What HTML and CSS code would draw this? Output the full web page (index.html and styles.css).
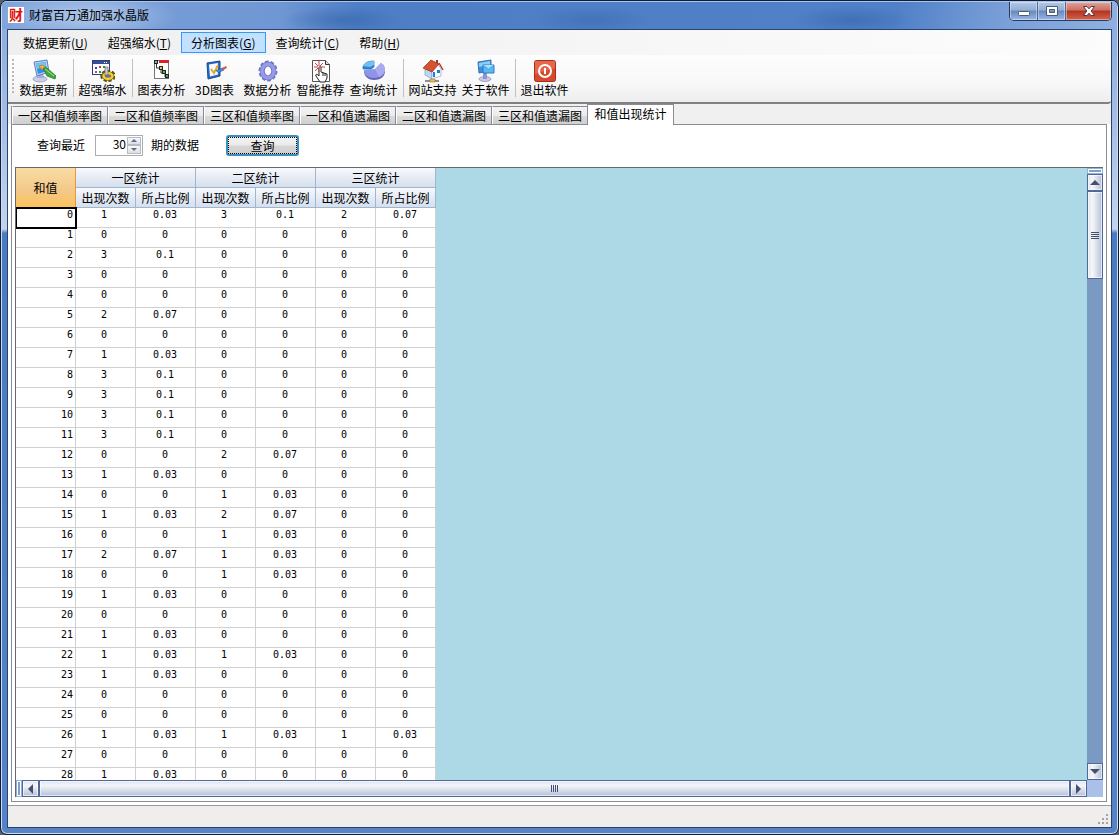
FILE: index.html
```html
<!DOCTYPE html>
<html lang="zh-CN">
<head>
    <meta charset="UTF-8">
    <meta name="viewport" content="width=device-width, initial-scale=1.0">
    <title>财富百万通加强水晶版</title>
    <link rel="stylesheet" href="styles.css">
</head>
<body>
    <div class="window">
        <header class="titlebar">
            <span class="app-icon">财</span>
            <h1 class="title">财富百万通加强水晶版</h1>
            <div class="window-buttons">
                <button class="win-btn" aria-label="最小化">
                    <svg width="14" height="12" viewBox="0 0 14 12"><rect x="1.5" y="6.5" width="11" height="4" rx="1" fill="#fff" stroke="#4b5a75"/></svg>
                </button>
                <button class="win-btn" aria-label="最大化">
                    <svg width="14" height="12" viewBox="0 0 14 12"><path fill-rule="evenodd" d="M1.5 1.5h11v9h-11zM4.5 4.500v3h5v-3z" fill="#fff" stroke="#4b5a75"/></svg>
                </button>
                <button class="win-btn close" aria-label="关闭">
                    <svg width="14" height="12" viewBox="0 0 14 12"><path d="M1.500 1.500h3.500L7 3.800l2-2.300h3.500L9.200 6l3.300 4.500H9L7 8.200l-2 2.300H1.500L4.800 6z" fill="#fff" stroke="#5a3540"/></svg>
                </button>
            </div>
        </header>

        <div class="client">
            <nav class="menubar">
                <button class="menu">数据更新(<u>U</u>)</button>
                <button class="menu">超强缩水(<u>T</u>)</button>
                <button class="menu active">分析图表(<u>G</u>)</button>
                <button class="menu">查询统计(<u>C</u>)</button>
                <button class="menu">帮助(<u>H</u>)</button>
            </nav>

            <div class="toolbar">
                <span class="grip"></span>
                <button class="tool">
                    <svg width="24" height="24" viewBox="0 0 24 24">
                        <ellipse cx="8" cy="20" rx="7" ry="3" fill="#c9cde6" stroke="#8c93bb" stroke-width=".7"/>
                        <path d="M6 14h5l1 5H5z" fill="#a5addb"/>
                        <path d="M2 3l13-2 2 12-12 4z" fill="#b9d2f3" stroke="#5e7fc0"/>
                        <path d="M4 4.500L13.500 3 15 12l-9 3z" fill="#2e8fe6"/>
                        <path d="M4 4.500L13.500 3l.6 4L5 10z" fill="#6fc4f7"/>
                        <path d="M7 7l4-1 3 3-4 2z" fill="#f3b63c" stroke="#b06f18" stroke-width=".6"/>
                        <path d="M11 9l4 0 9 8-1 3-8-3z" fill="#3faa3b" stroke="#23752a" stroke-width=".7"/>
                        <path d="M13 10l9 7" stroke="#a3e58d"/>
                    </svg>
                    <span>数据更新</span>
                </button>
                <span class="separator"></span>
                <button class="tool">
                    <svg width="24" height="24" viewBox="0 0 24 24">
                        <rect x="1.500" y="1.500" width="17" height="14" fill="#fff" stroke="#35406f"/>
                        <path d="M2 3.500h16" stroke="#344f9d" stroke-width="3"/>
                        <path d="M13 3.500h1m1 0h1" stroke="#fff"/>
                        <path d="M4 8h2v2H4z" fill="#2648c9"/><path d="M8 7h2v2H8z" fill="#d23535"/><path d="M4 12h2v2H4z" fill="#c43a9c"/><path d="M8 12h2v2H8z" fill="#2a9b42"/><path d="M12 7h2v2h-2z" fill="#2a9b42"/>
                        <ellipse cx="17" cy="17" rx="5.500" ry="4" fill="none" stroke="#665312" stroke-width="4.500" stroke-dasharray="2.700 1.500"/>
                        <ellipse cx="17" cy="17" rx="4.500" ry="3" fill="#777" stroke="#665312" stroke-width="3.600"/>
                        <ellipse cx="17" cy="17" rx="4.500" ry="3" fill="#777" stroke="#f1d338" stroke-width="2.400"/>
                        <path d="M14 8h3v8h-3z" fill="#ccc" stroke="#555" stroke-width=".6"/>
                    </svg>
                    <span>超强缩水</span>
                </button>
                <span class="separator"></span>
                <button class="tool">
                    <svg width="24" height="24" viewBox="0 0 24 24">
                        <rect x="4.500" y="1.500" width="14" height="18" fill="#fff" stroke="#777"/>
                        <path d="M9 1h10v3H9z" fill="#dd2020"/>
                        <path d="M6.500 5v4H10M11 11v3h4v4" fill="none" stroke="#333"/>
                        <rect x="4.500" y="1.500" width="3" height="3" fill="#6eb5c8" stroke="#222"/>
                        <rect x="9.500" y="7.500" width="3" height="3" fill="#e9c846" stroke="#222"/>
                        <rect x="12.500" y="11.500" width="3" height="3" fill="#55bd55" stroke="#222"/>
                        <rect x="15.500" y="15.500" width="3" height="3" fill="#3ca649" stroke="#222"/>
                    </svg>
                    <span>图表分析</span>
                </button>
                <button class="tool">
                    <svg width="24" height="24" viewBox="0 0 24 24">
                        <path d="M4 4l13-2v15L5 20z" fill="#236bc2" stroke="#194b91"/>
                        <path d="M6 5.500L15 4v11.500L7 17.500z" fill="#f6faff"/>
                        <path d="M8 10l3 4 4-8" fill="none" stroke="#eda22a" stroke-width="2"/>
                        <path d="M13 11.500l7-2.500 1 2-6 2.500z" fill="#4c92dc" stroke="#225799" stroke-width=".7"/>
                        <path d="M19 9l4-2 1 2-4 2z" fill="#df5454"/>
                    </svg>
                    <span>3D图表</span>
                </button>
                <button class="tool">
                    <svg width="24" height="24" viewBox="0 0 24 24">
                        <ellipse cx="12" cy="12" rx="8" ry="9" fill="none" stroke="#7479c9" stroke-width="3" stroke-dasharray="3.300 2"/>
                        <ellipse cx="12" cy="12" rx="5.800" ry="7" fill="none" stroke="#6b70c3" stroke-width="5"/>
                        <ellipse cx="12" cy="12" rx="6" ry="7" fill="none" stroke="#969be7" stroke-width="3.500"/>
                    </svg>
                    <span>数据分析</span>
                </button>
                <button class="tool">
                    <svg width="24" height="24" viewBox="0 0 24 24">
                        <path d="M3.500 1.500h13l4 4v17h-17z" fill="#fff" stroke="#555"/>
                        <path d="M16.500 1.500v4h4" fill="#ddd" stroke="#333"/>
                        <path d="M10 2v5M10 9v4M5 8h4M11 8h5M6 4l3 3M14 4l-3 3M6 12l3-3" stroke="#e33838"/>
                        <path d="M10 9c0-2 2-2 2 0v4l6 2v4l-2 4h-5l-4-6c-1-2 1-2 2-1l1 1z" fill="#fff" stroke="#222"/>
                        <path d="M14 14v3M16 14.500V17" stroke="#222"/>
                    </svg>
                    <span>智能推荐</span>
                </button>
                <button class="tool">
                    <svg width="24" height="24" viewBox="0 0 24 24">
                        <path d="M2 12c0 6 5 9 10 9 6 0 11-3 11-9z" fill="#6264b9"/>
                        <path d="M2 11l11-1 6-6c7 4 4 15-7 15-6 0-10-3-10-8z" fill="#9094e8"/>
                        <path d="M13 10l6-6c7 4 4 12-2 14z" fill="#a9abf1"/>
                        <path d="M1 8c1-4 5-6 11-6v6L9 10H1z" fill="#2e87d7" stroke="#2a62b2" stroke-width=".7"/>
                        <path d="M1 7c1-3 5-5 11-5v4L8 8z" fill="#6fc0f3"/>
                    </svg>
                    <span>查询统计</span>
                </button>
                <span class="separator"></span>
                <button class="tool">
                    <svg width="24" height="24" viewBox="0 0 24 24">
                        <path d="M11 18v4M4 22h14" stroke="#8d8d9d" stroke-width="2"/>
                        <path d="M9 20h5v3H9z" fill="#f0c13a" stroke="#9f7925" stroke-width=".6"/>
                        <path d="M4 10l7 2v8l-7-4z" fill="#b7daf5" stroke="#6e8dbc" stroke-width=".6"/>
                        <path d="M11 11l6-6 3 5v7l-9 3z" fill="#f9fbff" stroke="#7d98c6" stroke-width=".6"/>
                        <path d="M15 1h2v5h-2z" fill="#a8341f"/>
                        <path d="M2 9l8-8 8 4-7 8z" fill="#d6532f" stroke="#93301a" stroke-width=".7"/>
                        <path d="M18 4l4 7" stroke="#a9401f" stroke-width="1.500"/>
                        <path d="M12 13h2v5h-2zM16 11h3v3h-3z" fill="#2879d5"/>
                    </svg>
                    <span>网站支持</span>
                </button>
                <button class="tool">
                    <svg width="24" height="24" viewBox="0 0 24 24">
                        <ellipse cx="11" cy="20" rx="6" ry="2.500" fill="#c8cbe7" stroke="#8389b5" stroke-width=".7"/>
                        <path d="M9 14h4v6H9z" fill="#8d94c9"/>
                        <path d="M4 3l13-2v11L5 14z" fill="#3593df" stroke="#3a70b5"/>
                        <path d="M5 4l11-2v4L5 8z" fill="#89cff7"/>
                        <path d="M9 6h11v8H9z" fill="#5ab7f0" stroke="#2a7dc5"/>
                        <path d="M9 6l5.500 4L20 6" fill="#a7e2fb" stroke="#3b8fd1" stroke-width=".6"/>
                    </svg>
                    <span>关于软件</span>
                </button>
                <span class="separator"></span>
                <button class="tool">
                    <svg width="24" height="24" viewBox="0 0 24 24">
                        <rect x="1.500" y="1.500" width="21" height="21" rx="2" fill="#d8492e" stroke="#a92c18"/>
                        <path d="M2 2h20v7L2 15z" fill="#ed7d5f" opacity=".6"/>
                        <circle cx="12" cy="12" r="6" fill="none" stroke="#fff" stroke-width="2"/>
                        <path d="M12 9v6" stroke="#fff" stroke-width="2"/>
                    </svg>
                    <span>退出软件</span>
                </button>
            </div>

            <div class="tabs" role="tablist">
                <button class="tab" role="tab">一区和值频率图</button>
                <button class="tab" role="tab">二区和值频率图</button>
                <button class="tab" role="tab">三区和值频率图</button>
                <button class="tab" role="tab">一区和值遗漏图</button>
                <button class="tab" role="tab">二区和值遗漏图</button>
                <button class="tab" role="tab">三区和值遗漏图</button>
                <button class="tab selected" role="tab" aria-selected="true">和值出现统计</button>
            </div>

            <main class="panel">
                <form class="query" onsubmit="return false">
                    <label for="periods">查询最近</label>
                    <div class="spinner">
                        <input id="periods" type="number" value="30">
                        <div class="spin-buttons">
                            <button type="button" class="spin" aria-label="增加"><span class="arrow up"></span></button>
                            <button type="button" class="spin" aria-label="减少"><span class="arrow down"></span></button>
                        </div>
                    </div>
                    <span>期的数据</span>
                    <button class="submit">查询</button>
                </form>

                <div class="grid">
                    <div class="view">
                        <table>
                            <thead>
                                <tr>
                                    <th class="corner" rowspan="2">和值</th>
                                    <th colspan="2">一区统计</th>
                                    <th colspan="2">二区统计</th>
                                    <th colspan="2">三区统计</th>
                                </tr>
                                <tr>
                                    <th>出现次数</th>
                                    <th>所占比例</th>
                                    <th>出现次数</th>
                                    <th>所占比例</th>
                                    <th>出现次数</th>
                                    <th>所占比例</th>
                                </tr>
                            </thead>
                            <tbody id="rows"></tbody>
                        </table>
                    </div>
                    <div class="vscroll">
                        <span class="split"></span>
                        <button class="scroll-btn" aria-label="向上"><span class="arrow up"></span></button>
                        <span class="thumb"><i></i></span>
                        <span class="track"></span>
                        <button class="scroll-btn" aria-label="向下"><span class="arrow down"></span></button>
                    </div>
                    <div class="hscroll">
                        <span class="split"></span>
                        <button class="scroll-btn" aria-label="向左"><span class="arrow left"></span></button>
                        <span class="thumb"><i></i></span>
                        <button class="scroll-btn" aria-label="向右"><span class="arrow right"></span></button>
                    </div>
                    <div class="scroll-corner"></div>
                </div>
            </main>

            <footer class="statusbar">
                <svg width="12" height="12" viewBox="0 0 12 12" fill="#a6a3a3"><path d="M8 0h2v2H8zM4 4h2v2H4zM8 4h2v2H8zM0 8h2v2H0zM4 8h2v2H4zM8 8h2v2H8z"/></svg>
            </footer>
        </div>
    </div>
    <script>
        // how often each sum came up in zones one, two and three
        const counts = [
            [1, 3, 2], [0, 0, 0], [3, 0, 0], [0, 0, 0], [0, 0, 0],
            [2, 0, 0], [0, 0, 0], [1, 0, 0], [3, 0, 0], [3, 0, 0],
            [3, 0, 0], [3, 0, 0], [0, 2, 0], [1, 0, 0], [0, 1, 0],
            [1, 2, 0], [0, 1, 0], [2, 1, 0], [0, 1, 0], [1, 0, 0],
            [0, 0, 0], [1, 0, 0], [1, 1, 0], [1, 0, 0], [0, 0, 0],
            [0, 0, 0], [1, 1, 1], [0, 0, 0], [1, 0, 0]
        ];
        const periods = Number(document.getElementById('periods').value);
        let html = '';
        counts.forEach(function (row, sum) {
            html += '<tr><td class="sum' + (sum === 0 ? ' current' : '') + '">' + sum + '</td>';
            row.forEach(function (n) {
                html += '<td>' + n + '</td><td>' + Math.round(n / periods * 100) / 100 + '</td>';
            });
            html += '</tr>';
        });
        document.getElementById('rows').innerHTML = html;
    </script>
</body>
</html>
```

FILE: styles.css
```css
* {
    box-sizing: border-box;
}
body {
    margin: 0;
    background: #55606e;
    color: #000;
    font: 12px/16px "Noto Sans CJK SC", sans-serif;
}
button, input {
    font: inherit;
    color: inherit;
    margin: 0;
    padding: 0;
}
.window {
    display: flex;
    flex-direction: column;
    height: 100vh;
    padding: 0 7px 7px;
    border: 1px solid #101c33;
    border-radius: 7px;
    background: linear-gradient(#86a8dc, #c2d3ee 228px, #4a7bc0 232px, #5583c6);
    box-shadow: inset 0 0 0 1px #c8dcf5;
    overflow: hidden;
}

/* title bar */
.titlebar {
    display: flex;
    align-items: center;
    flex: none;
    height: 28px;
    margin: 0 -6px;
    padding: 0 5px 2px 6px;
    background:
        radial-gradient(90px 26px at 85px 14px, rgba(190, 211, 240, .8), rgba(190, 211, 240, 0)),
        radial-gradient(60px 14px at 340px 18px, rgba(50, 95, 165, .5), rgba(50, 95, 165, 0)),
        radial-gradient(60px 14px at 590px 18px, rgba(50, 95, 165, .4), rgba(50, 95, 165, 0)),
        radial-gradient(60px 14px at 850px 18px, rgba(50, 95, 165, .5), rgba(50, 95, 165, 0)),
        linear-gradient(100deg, #7fa3da, #6f97d3 25%, #4d7ec6 32%, #5080c8 80%, #7ba0d8 90%, #8fb0e0);
    border-top: 1px solid #a9c6ee;
}
.app-icon {
    width: 16px;
    height: 16px;
    background: #fff;
    color: #e0130c;
    font-weight: bold;
    font-size: 14px;
    line-height: 14px;
    text-align: center;
}
.title {
    margin: 0 0 0 5px;
    font-size: 12px;
    font-weight: normal;
}
.window-buttons {
    display: flex;
    align-self: flex-start;
    margin-left: auto;
    height: 19px;
    border: 1px solid #273b62;
    border-top: 0;
    border-radius: 0 0 5px 5px;
    overflow: hidden;
}
.win-btn {
    display: flex;
    align-items: center;
    justify-content: center;
    width: 28px;
    border: 0;
    border-right: 1px solid #4c6696;
    background: linear-gradient(#b5c8e4, #93aed6 45%, #6788bd 50%, #9ab8e4);
    box-shadow: inset 0 0 0 1px rgba(255, 255, 255, .4);
}
.win-btn.close {
    width: 45px;
    border-right: 0;
    background: linear-gradient(#dba79f, #cd6f61 45%, #b23320 50%, #cf6650);
}

.client {
    display: flex;
    flex-direction: column;
    flex: 1;
    min-height: 0;
    border: 1px solid #28446f;
    background: #fff;
    margin: 0 -1px -1px;
}

/* menu */
.menubar {
    display: flex;
    flex: none;
    height: 25px;
    padding: 2px 5px;
    background: linear-gradient(90deg, #efefef, #fcfcfc);
}
.menu {
    height: 21px;
    padding: 0 9px;
    border: 1px solid transparent;
    background: none;
    line-height: 18px;
}
.menu.active {
    border-color: #3399ff;
    background: #c2e0ff;
}

/* toolbar */
.toolbar {
    display: flex;
    flex: none;
    height: 49px;
    padding: 4px 0 0 4px;
    background: linear-gradient(#fdfdfd, #f8f8f8 60%, #ededed);
    border-bottom: 2px solid #808080;
    border-radius: 0 0 3px 0;
}
.grip {
    width: 2px;
    height: 36px;
    margin-right: 3px;
    background: repeating-linear-gradient(#b8b8b8 0 2px, transparent 2px 4px);
}
.separator {
    width: 1px;
    height: 38px;
    margin: 0 2px 0 3px;
    background: #c0c0c0;
}
.tool {
    display: flex;
    flex-direction: column;
    align-items: center;
    width: 53px;
    border: 0;
    background: none;
    white-space: nowrap;
}
.tool span {
    line-height: 14px;
}

/* tabs */
.tabs {
    display: flex;
    align-items: flex-end;
    flex: none;
    height: 20px;
    padding: 0 4px;
    background: #f0f0f0;
}
.tab {
    width: 96px;
    height: 18px;
    border: 1px solid #898c95;
    border-left-color: #fff;
    border-bottom: 0;
    background: linear-gradient(#f2f2f2, #ececec 50%, #dadada 55%, #cfcfcf);
    box-shadow: -1px 0 0 #898c95;
    white-space: nowrap;
    line-height: 16px;
}
.tab.selected {
    position: relative;
    width: 87px;
    height: 21px;
    margin: 0 0 -1px -1px;
    padding-bottom: 3px;
    border-left-color: #898c95;
    background: #fff;
    box-shadow: none;
}

/* page */
.panel {
    display: flex;
    flex-direction: column;
    flex: 1;
    min-height: 0;
    margin: 0 4px 3px 3px;
    padding: 0 3px 4px;
    border: 1px solid #898c95;
    background: #fff;
}
.query {
    display: flex;
    align-items: center;
    flex: none;
    height: 42px;
    padding: 0 0 2px 22px;
}
.spinner {
    display: flex;
    width: 48px;
    height: 21px;
    margin: 0 8px 0 10px;
    padding: 1px;
    border: 1px solid #abadb3;
}
.spinner input {
    flex: 1;
    min-width: 0;
    height: 15px;
    border: 0;
    outline: 0;
    text-align: right;
    padding-right: 1px;
    background: none;
    appearance: textfield;
}
.spinner input::-webkit-inner-spin-button {
    appearance: none;
    margin: 0;
}
.spin-buttons {
    display: flex;
    flex-direction: column;
    width: 14px;
}
.spin {
    display: flex;
    flex: 1;
    align-items: center;
    justify-content: center;
    border: 1px solid #b9bcc2;
    background: linear-gradient(#f8f8f8, #dedede);
}
.submit {
    width: 73px;
    height: 21px;
    margin-left: 27px;
    border: 2px solid #3c8fc1;
    border-radius: 3px;
    background: linear-gradient(#f2f2f2, #ebebeb 48%, #d6d6d6 52%, #cfcfcf);
    outline: 1px dotted #000;
    outline-offset: -3px;
    line-height: 15px;
}

.arrow {
    width: 0;
    height: 0;
    border: 5px solid transparent;
}
.arrow.up {
    border-top: 0;
    border-bottom-color: #454f6e;
}
.arrow.down {
    border-bottom: 0;
    border-top-color: #454f6e;
}
.arrow.left {
    border-left: 0;
    border-right-color: #454f6e;
}
.arrow.right {
    border-right: 0;
    border-left-color: #454f6e;
}
.spin .arrow {
    border-width: 3px;
}
.spin .arrow.up {
    border-top: 0;
    border-bottom-color: #5b66a5;
}
.spin .arrow.down {
    border-bottom: 0;
    border-top-color: #5b66a5;
}

/* data grid */
.grid {
    display: grid;
    grid-template-columns: 1fr 16px;
    grid-template-rows: 1fr 17px;
    flex: 1;
    min-height: 0;
    border-top: 1px solid #696969;
    border-left: 1px solid #696969;
}
.view {
    min-height: 0;
    overflow: hidden;
    background: #add8e6;
}
table {
    table-layout: fixed;
    width: 420px;
    border-spacing: 0;
    background: #fff;
}
th, td {
    height: 20px;
    padding: 0;
    border-right: 1px solid #d0d0d0;
    border-bottom: 1px solid #d0d0d0;
    text-align: center;
    white-space: nowrap;
}
th {
    border-color: #9eb6ce;
    background: linear-gradient(#f7f9fc, #d6dfee);
    font-weight: normal;
}
th.corner {
    border-color: #f29536;
    background: linear-gradient(#f9dca4, #f3c98b 55%, #fbc35c);
}
td {
    padding: 1px 3px 6px 0;
    font: 10px/12px "DejaVu Sans Mono", monospace;
}
td:nth-child(odd) {
    padding-right: 1px;
}
td.sum {
    padding-right: 2px;
    text-align: right;
}
td.current {
    outline: 2px solid #000;
    outline-offset: -1px;
}

/* scroll bars */
.vscroll, .hscroll {
    display: flex;
    background: #7a9ac3;
}
.vscroll {
    flex-direction: column;
}
.split {
    flex: 0 0 6px;
    border: 1px solid #8fb4dc;
    background: #7d9fcc;
    box-shadow: inset 0 0 0 1px #fff;
}
.scroll-btn, .thumb {
    display: flex;
    align-items: center;
    justify-content: center;
    border: 1px solid #53689a;
    background: linear-gradient(90deg, #dde3ee, #f7f8fb 30%, #b5c1d8);
    box-shadow: inset 0 0 0 1px rgba(255, 255, 255, .6);
}
.scroll-btn {
    flex: 0 0 17px;
}
.vscroll .thumb {
    flex: 0 0 88px;
}
.track {
    flex: 1;
}
.hscroll .thumb {
    flex: 1;
}
.hscroll .scroll-btn, .hscroll .thumb {
    background: linear-gradient(#dde3ee, #f3f5f9 30%, #b5c1d8);
}
.thumb i {
    width: 8px;
    height: 7px;
    background: repeating-linear-gradient(#454f6e 0 1px, transparent 1px 2px);
}
.hscroll .thumb i {
    background: repeating-linear-gradient(90deg, #454f6e 0 1px, transparent 1px 2px);
}
.scroll-corner {
    background: #a9c0e8;
}

.statusbar {
    display: flex;
    align-items: flex-end;
    justify-content: flex-end;
    flex: none;
    height: 22px;
    padding: 0 1px 1px 0;
    border-top: 1px solid #9a9a9a;
    background: #f0eded;
}
```
